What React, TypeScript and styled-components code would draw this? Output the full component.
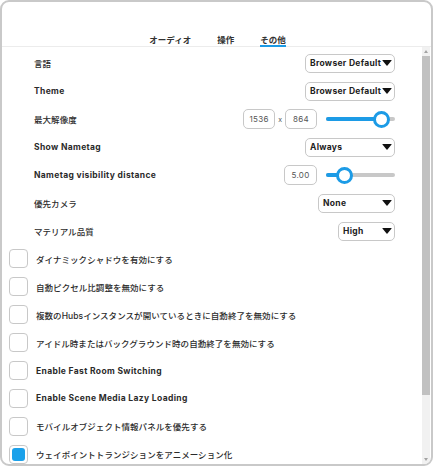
import React from "react";
import styled, { createGlobalStyle } from "styled-components";

const Global = createGlobalStyle`
  html, body { margin: 0; padding: 0; background: #fff; }
  body { font-family: Inter, "Noto Sans CJK JP", sans-serif; color: #2b2b2b; }
  * { box-sizing: border-box; }
`;

const Frame = styled.div`
  width: 433px;
  height: 466px;
  border: 2px solid #c9c9c9;
  border-radius: 9px;
  display: flex;
  flex-direction: column;
  overflow: hidden;
  background: #fff;
`;

const Header = styled.div`
  height: 45px;
  flex: none;
  display: flex;
  justify-content: center;
  align-items: flex-end;
  gap: 26px;
  border-bottom: 1px solid #ececec;
  padding-left: 2px;
`;

const Tab = styled.div<{ $active?: boolean }>`
  font-family: "Noto Sans CJK JP", sans-serif;
  font-size: 8.5px;
  font-weight: 700;
  color: #333;
  padding-bottom: 0px;
  line-height: 11px;
  margin-bottom: -1px;
  border-bottom: 2px solid ${(p) => (p.$active ? "#1c9be6" : "transparent")};
`;

const Body = styled.div`
  flex: 1;
  display: flex;
  min-height: 0;
`;

const Scroll = styled.div`
  flex: 1;
  overflow: hidden;
`;

const ScrollBar = styled.div`
  width: 8px;
  flex: none;
  background: #f1f1f1;
  display: flex;
  flex-direction: column;
  margin-right: 1px;
`;

const ScrollArrow = styled.div<{ $down?: boolean }>`
  height: 9px;
  flex: none;
  display: flex;
  align-items: center;
  justify-content: center;
  &::after {
    content: "";
    border-left: 2.5px solid transparent;
    border-right: 2.5px solid transparent;
    ${(p) => (p.$down ? "border-top: 3px solid #a3a3a3;" : "border-bottom: 3px solid #a3a3a3;")}
  }
`;

const ScrollTrack = styled.div`
  flex: 1;
  display: flex;
  flex-direction: column;
`;

const ScrollThumb = styled.div`
  background: #c1c1c1;
`;

const Content = styled.div`
  padding: 2px 0 0 0;
  display: flex;
  flex-direction: column;
`;

const SettingRow = styled.div`
  height: 28px;
  display: flex;
  align-items: center;
  justify-content: space-between;
  padding-left: 32px;
  padding-right: 27px;
`;

const Label = styled.div<{ $latin?: boolean }>`
  font-size: 8.5px;
  font-weight: ${(p) => (p.$latin ? 700 : 500)};
  color: #2b2b2b;
  letter-spacing: ${(p) => (p.$latin ? "0.35px" : "0.05px")};
  white-space: nowrap;
`;

const Controls = styled.div`
  display: flex;
  align-items: center;
  gap: 4px;
`;

const Select = styled.div<{ $w: number }>`
  width: ${(p) => p.$w}px;
  height: 19px;
  border: 1px solid #c8c8c8;
  border-radius: 5px;
  display: flex;
  align-items: center;
  justify-content: space-between;
  padding: 0 2px 0 4px;
  font-size: 8.5px;
  letter-spacing: 0.3px;
  font-weight: 700;
  color: #222;
  white-space: nowrap;
`;

const Caret = styled.span`
  width: 0;
  height: 0;
  border-left: 5.5px solid transparent;
  border-right: 5.5px solid transparent;
  border-top: 6px solid #111;
  border-radius: 1px;
`;

const NumBox = styled.div<{ $w: number }>`
  width: ${(p) => p.$w}px;
  height: 20px;
  border: 1px solid #c8c8c8;
  border-radius: 5px;
  display: flex;
  align-items: center;
  justify-content: center;
  font-size: 8px;
  letter-spacing: 0.3px;
  color: #555;
`;

const Times = styled.span`
  font-size: 7px;
  color: #555;
  margin: 0 -1px;
`;

const SliderTrack = styled.div`
  position: relative;
  width: 69px;
  height: 4px;
  border-radius: 2px;
  background: #c8c8c8;
  margin-left: 5px;
`;

const SliderFill = styled.div`
  position: absolute;
  left: 0;
  top: 0;
  bottom: 0;
  background: #1c9be6;
  border-radius: 2px;
`;

const Thumb = styled.div`
  position: absolute;
  top: 50%;
  width: 17px;
  height: 17px;
  margin-left: -8.5px;
  margin-top: -8.5px;
  border-radius: 50%;
  background: #fff;
  border: 3px solid #1c9be6;
`;

const CheckRow = styled.div`
  height: 27.9px;
  display: flex;
  align-items: center;
  gap: 8px;
  padding-left: 7px;
`;

const Box = styled.div<{ $checked?: boolean }>`
  width: 19px;
  height: 19px;
  border: 1px solid #c8c8c8;
  border-radius: 4px;
  display: flex;
  align-items: center;
  justify-content: center;
  &::after {
    content: "";
    display: ${(p) => (p.$checked ? "block" : "none")};
    width: 13px;
    height: 13px;
    border-radius: 3px;
    background: #1ba1ea;
  }
`;

const Slider = ({ pct }: { pct: number }) => (
  <SliderTrack>
    <SliderFill style={{ width: `${pct}%` }} />
    <Thumb style={{ left: `${pct}%` }} />
  </SliderTrack>
);

const checks: { text: string; latin?: boolean; checked?: boolean }[] = [
  { text: "ダイナミックシャドウを有効にする" },
  { text: "自動ピクセル比調整を無効にする" },
  { text: "複数のHubsインスタンスが開いているときに自動終了を無効にする" },
  { text: "アイドル時またはバックグラウンド時の自動終了を無効にする" },
  { text: "Enable Fast Room Switching", latin: true },
  { text: "Enable Scene Media Lazy Loading", latin: true },
  { text: "モバイルオブジェクト情報パネルを優先する" },
  { text: "ウェイポイントトランジションをアニメーション化", checked: true },
];

export default function App() {
  return (
    <>
      <Global />
      <Frame>
        <Header>
          <Tab>オーディオ</Tab>
          <Tab>操作</Tab>
          <Tab $active>その他</Tab>
        </Header>
        <Body>
          <Scroll>
            <Content>
              <SettingRow>
                <Label>言語</Label>
                <Select $w={90}>Browser Default<Caret /></Select>
              </SettingRow>
              <SettingRow>
                <Label $latin>Theme</Label>
                <Select $w={90}>Browser Default<Caret /></Select>
              </SettingRow>
              <SettingRow>
                <Label>最大解像度</Label>
                <Controls>
                  <NumBox $w={32}>1536</NumBox>
                  <Times>x</Times>
                  <NumBox $w={32}>864</NumBox>
                  <Slider pct={80} />
                </Controls>
              </SettingRow>
              <SettingRow>
                <Label $latin>Show Nametag</Label>
                <Select $w={90}>Always<Caret /></Select>
              </SettingRow>
              <SettingRow>
                <Label $latin>Nametag visibility distance</Label>
                <Controls>
                  <NumBox $w={33}>5.00</NumBox>
                  <Slider pct={27} />
                </Controls>
              </SettingRow>
              <SettingRow>
                <Label>優先カメラ</Label>
                <Select $w={77}>None<Caret /></Select>
              </SettingRow>
              <SettingRow>
                <Label>マテリアル品質</Label>
                <Select $w={57}>High<Caret /></Select>
              </SettingRow>
              {checks.map((c) => (
                <CheckRow key={c.text}>
                  <Box $checked={c.checked} />
                  <Label $latin={c.latin}>{c.text}</Label>
                </CheckRow>
              ))}
            </Content>
          </Scroll>
          <ScrollBar>
            <ScrollArrow />
            <ScrollTrack>
              <ScrollThumb style={{ height: "85%" }} />
            </ScrollTrack>
            <ScrollArrow $down />
          </ScrollBar>
        </Body>
      </Frame>
    </>
  );
}
